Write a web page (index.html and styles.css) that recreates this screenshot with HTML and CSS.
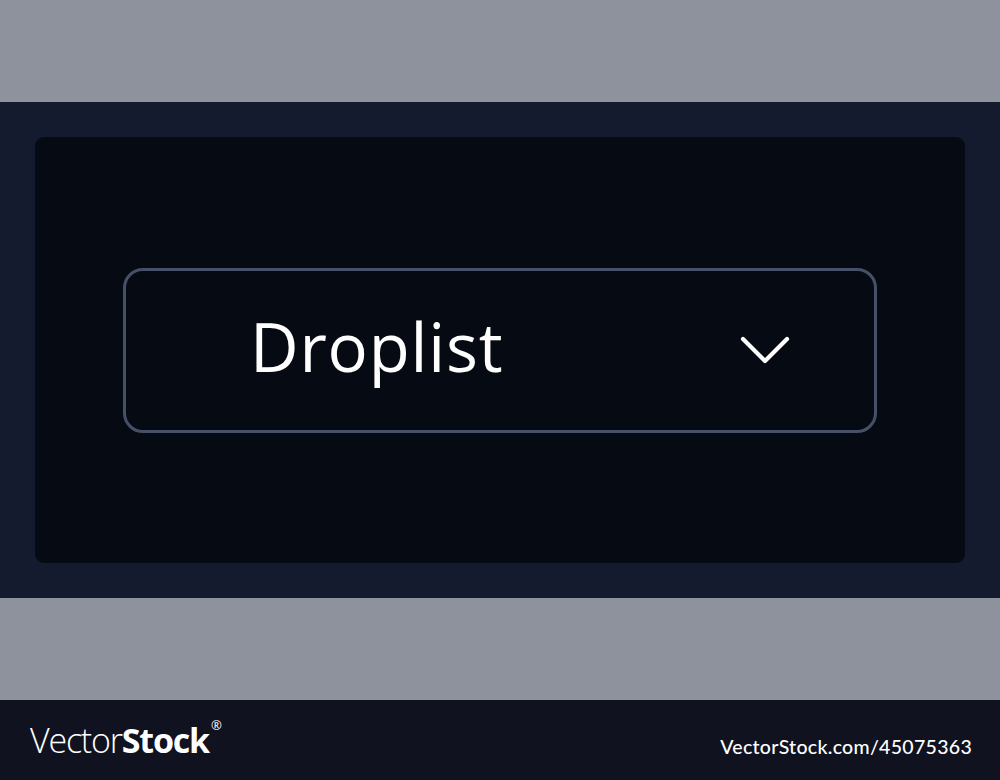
FILE: index.html
```html
<!DOCTYPE html>
<html>
<head>
<meta charset="utf-8">
<link rel="stylesheet" href="styles.css">
</head>
<body>
<div class="page">
  <div class="band"></div>
  <div class="stage">
    <div class="panel">
      <div class="droplist">
        <span class="label">Droplist</span>
        <svg class="chev" width="52" height="32" viewBox="0 0 52 32">
          <polyline points="3,4 25,26 47,4" fill="none" stroke="#ffffff" stroke-width="4.2" stroke-linecap="round" stroke-linejoin="round"/>
        </svg>
      </div>
    </div>
  </div>
  <div class="band"></div>
  <div class="footer">
    <div class="logo"><span class="thin">Vector</span><span class="bold">Stock</span><sup class="reg">®</sup></div>
    <div class="url">VectorStock.com/45075363</div>
  </div>
</div>
</body>
</html>
```
FILE: styles.css
```css
html, body {
  margin: 0;
  padding: 0;
}
body {
  width: 1000px;
  height: 780px;
  overflow: hidden;
  font-family: "Open Sans", "Liberation Sans", sans-serif;
}
.page {
  display: flex;
  flex-direction: column;
  width: 1000px;
  height: 780px;
}
.band {
  height: 102px;
  background: #8e929c;
}
.stage {
  height: 496px;
  background: #141b2e;
  padding: 35px;
  box-sizing: border-box;
}
.panel {
  height: 426px;
  background: #060a12;
  border-radius: 9px;
  padding-top: 131px;
  padding-left: 88px;
  box-sizing: border-box;
}
.droplist {
  width: 754px;
  height: 165px;
  box-sizing: border-box;
  border: 3px solid #465068;
  border-radius: 20px;
  display: flex;
  align-items: center;
  padding-left: 124px;
}
.label {
  color: #ffffff;
  font-family: "Open Sans", sans-serif;
  font-size: 67px;
  font-weight: 500;
  letter-spacing: 0.8px;
  margin-top: -10px;
}
.chev {
  margin-left: auto;
  margin-right: 82px;
  margin-top: 0;
}
.footer {
  height: 80px;
  background: #10121f;
  display: flex;
  align-items: center;
  justify-content: space-between;
  padding: 0 28px 0 30px;
  color: #ffffff;
}
.logo {
  font-family: "Open Sans", sans-serif;
  font-size: 34px;
  letter-spacing: -1.2px;
  line-height: 1;
}
.thin {
  font-weight: 300;
}
.bold {
  font-weight: 700;
}
.reg {
  font-size: 13px;
  vertical-align: top;
  position: relative;
  top: -4px;
  margin-left: 2px;
  letter-spacing: 0;
}
.url {
  font-family: "Lato", sans-serif;
  font-size: 19.5px;
  font-weight: 500;
  letter-spacing: 0.3px;
  margin-top: 12px;
}
```
